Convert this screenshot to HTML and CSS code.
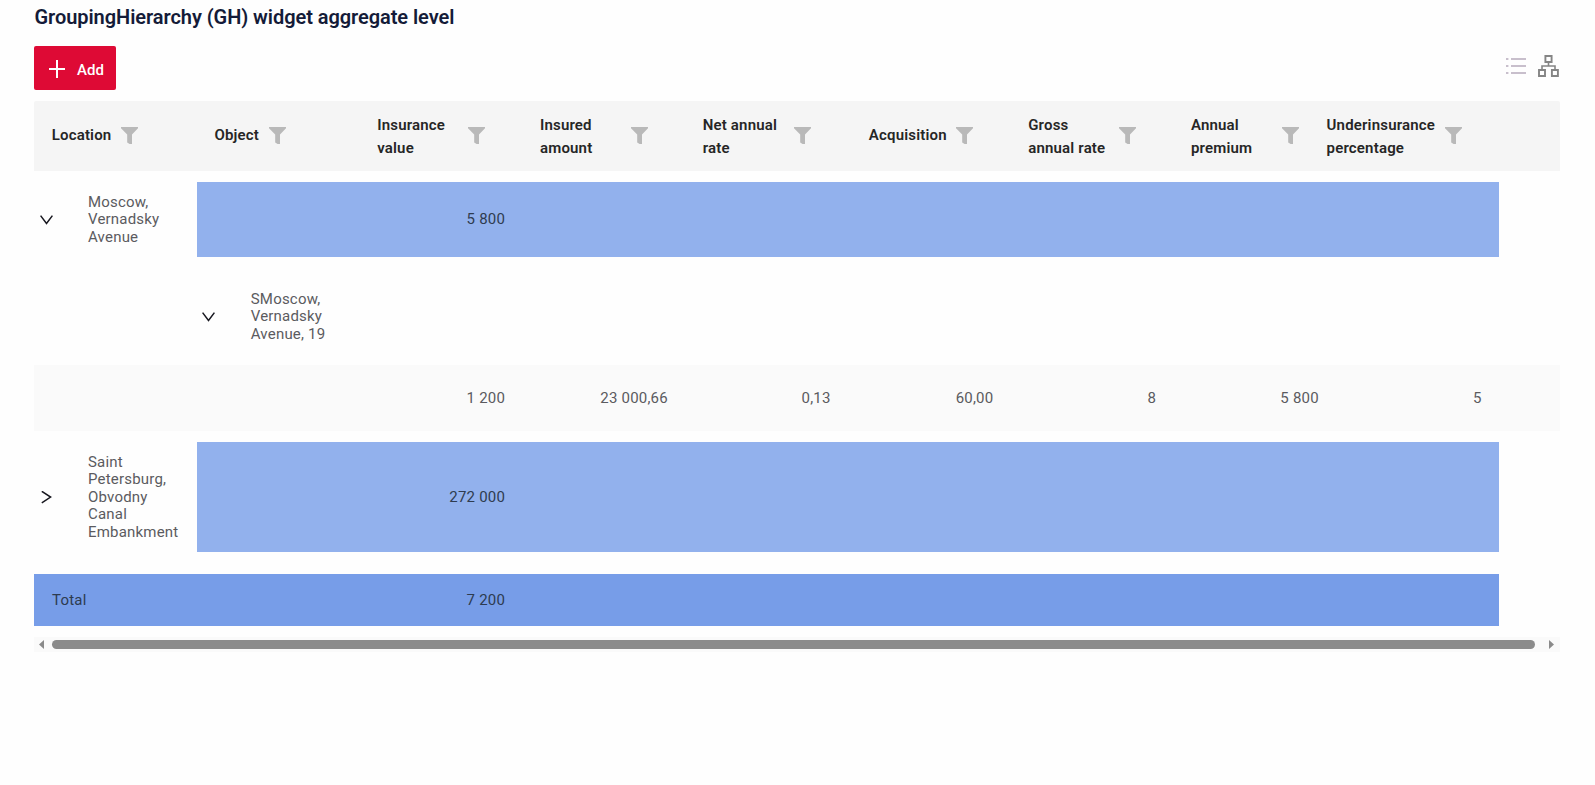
FILE: index.html
```html
<!DOCTYPE html>
<html lang="en">
<head>
<meta charset="utf-8">
<title>GroupingHierarchy (GH) widget aggregate level</title>
<link rel="stylesheet" href="styles.css">
</head>
<body>
<svg class="defs" width="0" height="0">
  <symbol id="filter" viewBox="0 0 17 17"><path d="M0 0H17V1.2L11 7.6V17H8.6L6.2 15.6V7.6L0 1.2Z" fill="currentColor"/></symbol>
</svg>
<main class="widget">
  <h1 class="title">GroupingHierarchy (GH) widget aggregate level</h1>
  <div class="toolbar">
    <button class="add"><svg width="16" height="18" viewBox="0 0 16 18"><path d="M8 0V18M0 9H16" stroke="#fff" stroke-width="2"/></svg><span>Add</span></button>
    <div class="modes">
      <svg width="20" height="18" viewBox="0 0 20 18"><path d="M5 2H20M5 9H20M5 16H20M0 2H2.4M0 9H2.4M0 16H2.4" stroke="#c8bfcc" stroke-width="2"/></svg>
      <svg width="21" height="22" viewBox="0 0 21 22" fill="none" stroke="#858585"><path stroke-width="1.9" d="M7.4 1H13.6V7H7.4ZM1 15H7V21H1ZM13.9 15H19.9V21H13.9Z"/><path stroke-width="1.6" d="M10.5 7V11M4 15V11H17V15"/></svg>
    </div>
  </div>
  <div class="table">
    <div class="row head">
      <div class="th"><span>Location</span><svg><use href="#filter"/></svg></div>
      <div class="th"><span>Object</span><svg><use href="#filter"/></svg></div>
      <div class="th num"><span>Insurance value</span><svg><use href="#filter"/></svg></div>
      <div class="th num"><span>Insured amount</span><svg><use href="#filter"/></svg></div>
      <div class="th num"><span>Net annual rate</span><svg><use href="#filter"/></svg></div>
      <div class="th num single"><span>Acquisition</span><svg><use href="#filter"/></svg></div>
      <div class="th num"><span>Gross annual rate</span><svg><use href="#filter"/></svg></div>
      <div class="th num"><span>Annual premium</span><svg><use href="#filter"/></svg></div>
      <div class="th num"><span>Underinsurance percentage</span><svg><use href="#filter"/></svg></div>
    </div>
    <div class="row group">
      <div class="td name"><svg width="13" height="10" viewBox="0 0 13 10"><path d="M.6 .6L6.5 8.4L12.4 .6"/></svg><span>Moscow, Vernadsky Avenue</span></div>
      <div class="band"><div class="td value">5 800</div></div>
    </div>
    <div class="row group">
      <div class="td name nested"><svg width="13" height="10" viewBox="0 0 13 10"><path d="M.6 .6L6.5 8.4L12.4 .6"/></svg><span>SMoscow, Vernadsky Avenue, 19</span></div>
    </div>
    <div class="row leaf">
      <div class="td"></div><div class="td"></div>
      <div class="td">1 200</div><div class="td">23 000,66</div><div class="td">0,13</div><div class="td">60,00</div><div class="td">8</div><div class="td">5 800</div><div class="td">5</div>
    </div>
    <div class="row group tall">
      <div class="td name"><svg width="13" height="13" viewBox="0 0 13 13"><path d="M1.8 .3L10.6 6.1L1.8 11.9"/></svg><span>Saint Petersburg, Obvodny Canal Embankment</span></div>
      <div class="band"><div class="td value">272 000</div></div>
    </div>
    <div class="row total"><div class="td label">Total</div><div class="td value">7 200</div></div>
  </div>
  <div class="scrollbar">
    <svg width="5" height="9" viewBox="0 0 5 9"><path d="M5 0V9L0 4.5Z"/></svg>
    <div class="thumb"></div>
    <svg width="5" height="9" viewBox="0 0 5 9"><path d="M0 0V9L5 4.5Z"/></svg>
  </div>
</main>
</body>
</html>
```
FILE: styles.css
```css
* { box-sizing: border-box; }
body { margin: 0; background: #fefefe; font-family: Roboto, sans-serif; font-size: 15px; color: #5b5b5f; overflow: hidden; }
.defs { display: block; height: 0; }
.widget { width: 1526px; margin-left: 34px; }
.title { margin: 0; padding: 3px 0 0 .5px; height: 46px; font-size: 20px; line-height: 28px; font-weight: 600; letter-spacing: -.06px; color: #141b38; }
.toolbar { display: flex; justify-content: space-between; height: 55px; }
.add { display: flex; align-items: center; gap: 12px; width: 82px; height: 44px; padding: 3px 0 0 15px; border: 0; border-radius: 2px; background: #de0a35; color: #fff; font: 500 15px/20px Roboto, sans-serif; }
.add svg { margin-bottom: 2px; }
.modes { display: flex; align-items: flex-start; gap: 11.5px; padding: 9px 1.5px 0 0; }
.modes svg:first-child { margin-top: 2px; }
.table { --col: 162.75px; }
.row { display: grid; grid-template-columns: repeat(9, var(--col)); align-items: center; }
.head { height: 70px; background: #f5f5f5; color: #262626; border-radius: 2px 2px 0 0; }
.th { display: flex; align-items: center; gap: 9.5px; padding-left: 17.7px; font-weight: 600; line-height: 23px; letter-spacing: .18px; }
.th svg { flex: none; width: 17px; height: 17px; color: #b9b9b9; margin-bottom: 1px; }
.num { justify-content: flex-end; padding-right: 37.2px; }
.num span { padding-top: 1px; }
.th:not(.num) span, .single span { padding: 0 0 1px; }
.td { padding: 1px 17.2px 0 18px; line-height: 17.4px; letter-spacing: .2px; text-align: right; }
.group { height: 97px; }
.tall { height: 132px; }
.name { display: flex; align-items: center; gap: 35px; padding: 0 18px 0 6px; text-align: left; }
.name span { padding-top: 1px; }
.name svg { flex: none; fill: none; stroke: #17171f; stroke-width: 1.5; }
.nested { grid-column: 2; gap: 35.5px; padding: 0 17px 0 5.5px; }
.band { grid-column: 2 / 10; height: calc(100% - 22px); display: grid; grid-template-columns: repeat(8, var(--col)); align-items: center; background: #92b1ed; color: #2f3c50; }
.band .value { grid-column: 2; }
.leaf { height: 66px; background: #fafafa; }
.total { width: 1465px; height: 52px; margin-top: 11px; background: #779de8; color: #2d3b50; }
.label { text-align: left; }
.total .value { grid-column: 3; }
.scrollbar { display: flex; align-items: center; justify-content: space-between; height: 15px; margin-top: 11px; padding: 0 6px 0 5px; background: #fafafa; }
.scrollbar svg { fill: #8a8a8a; }
.thumb { width: 1483px; height: 9px; margin-right: 6px; border-radius: 5px; background: #8b8b8b; }
```
